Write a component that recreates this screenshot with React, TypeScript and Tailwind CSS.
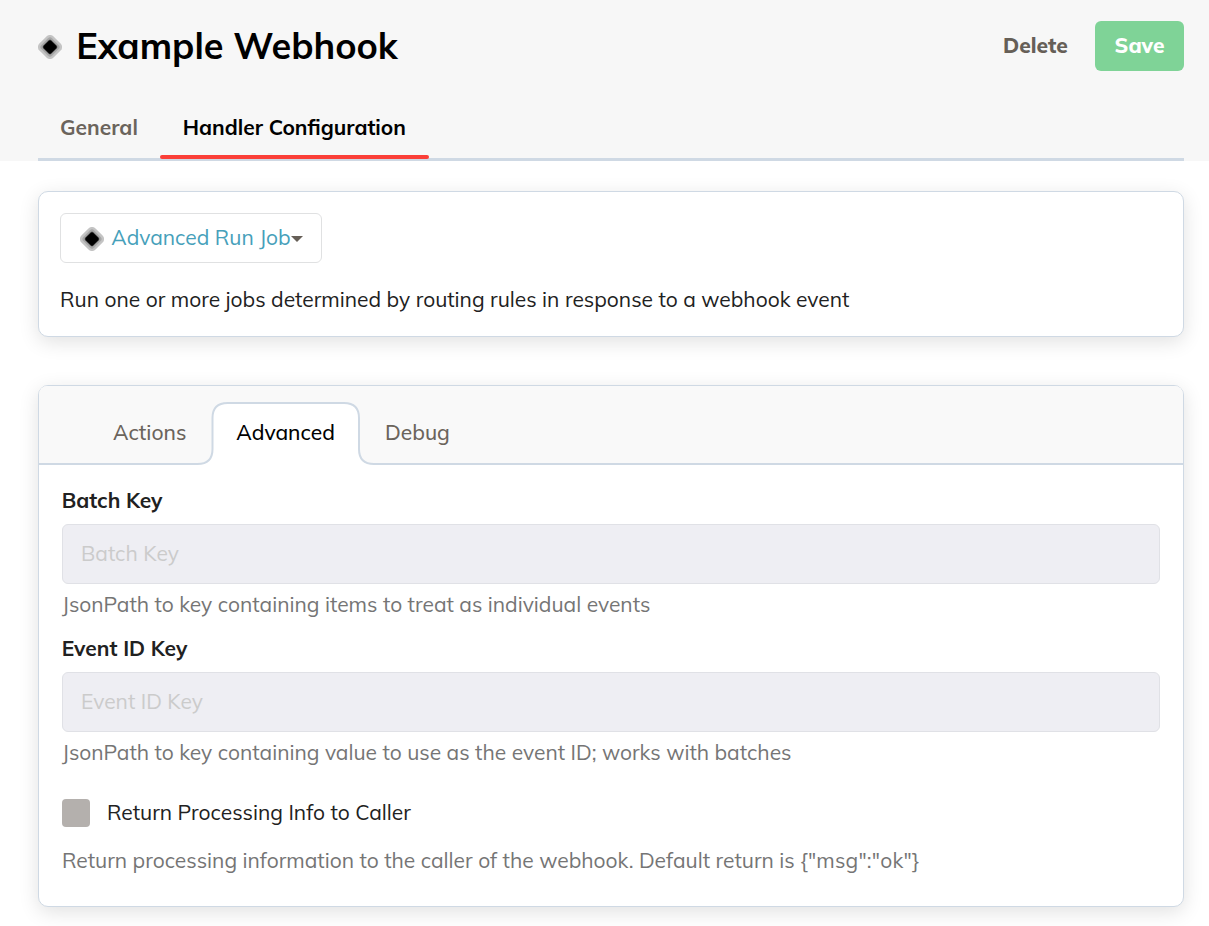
import React from "react";

function Diamond() {
  return (
    <svg width="24" height="24" viewBox="0 0 24 24" className="block shrink-0">
      <rect x="2" y="2" width="20" height="20" rx="5" fill="#c4c4c4" transform="rotate(45 12 12)" />
      <rect x="4.4" y="4.4" width="15.2" height="15.2" rx="3" fill="#a6a6a6" transform="rotate(45 12 12)" />
      <rect x="6.2" y="6.2" width="11.6" height="11.6" rx="2" fill="#000" fillOpacity="0.45" transform="rotate(45 12 12)" />
      <rect x="6.8" y="6.8" width="10.4" height="10.4" rx="1.6" fill="#000" transform="rotate(45 12 12)" />
    </svg>
  );
}

function Field({ label, hint }: { label: string; hint: string }) {
  return (
    <div className="h-[148px]">
      <div className="-ml-[0.3px] h-[38px] font-bold leading-[28px] text-[#212121]">{label}</div>
      <input
        placeholder={label}
        className="block h-[60px] w-full rounded-[6px] border border-[#e0e1e6] bg-[#eeeef3] px-[18px] pb-[2px] outline-none placeholder:text-[#cbcbcb]"
      />
      <div className="mt-[6px] leading-[28px] text-[#757575]">{hint}</div>
    </div>
  );
}

export default function App() {
  return (
    <div className="h-[926px] w-full overflow-hidden whitespace-nowrap bg-white font-['Mulish',sans-serif] text-[21px] text-[#212121]">
      <header className="flex h-[161px] flex-col bg-[#f7f7f7] pl-[38px] pr-[25px]">
        <div className="flex h-[98px] items-start pt-[21px]">
          <div className="flex h-[50px] items-center">
            <div className="pt-[2px]"><Diamond /></div>
            <h1 className="ml-[14.3px] text-[36px] font-bold leading-[50px] text-black">Example Webhook</h1>
          </div>
          <div className="ml-auto flex items-start">
            <button className="w-[65px] text-left font-extrabold leading-[49px] text-[#665f57]">Delete</button>
            <button className="ml-[27px] h-[50px] w-[89px] rounded-[6px] bg-[#7fd397] font-extrabold text-white">Save</button>
          </div>
        </div>
        <nav className="flex h-[63px] border-b-[3px] border-[#cfd9e4] font-bold leading-[58px]">
          <a className="w-[122px] pl-[22px] text-[#6b645c]">General</a>
          <a className="relative w-[269px] pl-[22.8px] text-black">
            Handler Configuration
            <span className="absolute -bottom-[1px] left-0 h-[4px] w-full rounded-[2px] bg-[#fb3f38]" />
          </a>
        </nav>
      </header>

      <main className="pl-[38px] pr-[25px] pt-[30px]">
        <section className="h-[146px] rounded-[10px] border border-[#cfd9e4] bg-white px-[21px] pt-[21px] shadow-[0_5px_20px_rgba(0,0,0,0.12)]">
          <button className="flex h-[50px] w-[262px] items-center rounded-[6px] border border-[#e0e1e2] pl-[19px] text-[#46a0ba]">
            <span className="pt-[2px]"><Diamond /></span>
            <span className="ml-[7.3px] w-[179.7px] text-left">Advanced Run Job</span>
            <svg width="12" height="6" viewBox="0 0 12 6" className="mt-px block shrink-0 fill-[#665f57]"><path d="M0 0H12L6 6Z" /></svg>
          </button>
          <p className="mt-[22px] leading-[28px]">Run one or more jobs determined by routing rules in response to a webhook event</p>
        </section>

        <section className="mt-[48px] h-[522px] rounded-[10px] border border-[#cfd9e4] bg-white shadow-[0_5px_20px_rgba(0,0,0,0.12)]">
          <div className="grid">
            <svg width="1144" height="79" viewBox="0 0 1144 79" className="col-start-1 row-start-1 block">
              <path d="M0 78H158.500Q173.500 78 173.500 63V32Q173.500 17 188.500 17H305Q320 17 320 32V63Q320 78 335 78H1144V9Q1144 0 1135 0H9Q0 0 0 9Z" fill="#f9f9f9" />
              <path d="M0 78H158.500Q173.500 78 173.500 63V32Q173.500 17 188.500 17H305Q320 17 320 32V63Q320 78 335 78H1144" fill="none" stroke="#cfd9e4" strokeWidth="2" />
            </svg>
            <nav className="col-start-1 row-start-1 flex pt-[16px] font-medium leading-[61px] text-[#6b645c]">
              <a className="w-[197.3px] pl-[74px]">Actions</a>
              <a className="w-[148.7px] text-black">Advanced</a>
              <a>Debug</a>
            </nav>
          </div>
          <div className="px-[23px] pt-[21px]">
            <Field label="Batch Key" hint="JsonPath to key containing items to treat as individual events" />
            <Field label="Event ID Key" hint="JsonPath to key containing value to use as the event ID; works with batches" />
            <label className="mt-[17px] flex h-[28px] items-center">
              <span className="mr-[17px] h-[28px] w-[28px] rounded-[4px] bg-[#b4b0ad]" />
              <span>Return Processing Info to Caller</span>
            </label>
            <p className="mt-[19px] leading-[28px] text-[#757575]">
              Return processing information to the caller of the webhook. Default return is{" "}
              <span className="tracking-[0.2px]">{'{"msg":"ok"}'}</span>
            </p>
          </div>
        </section>
      </main>
    </div>
  );
}
